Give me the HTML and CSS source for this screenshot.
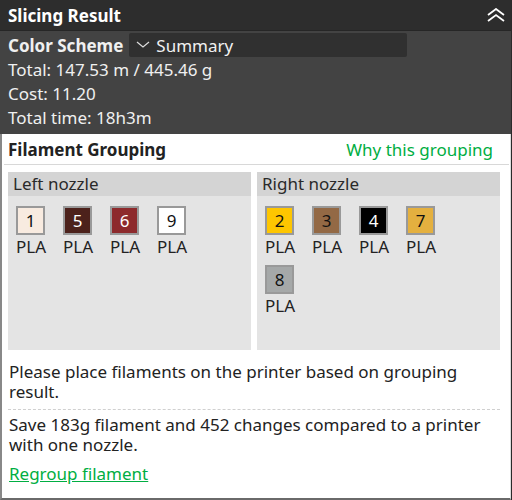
FILE: index.html
```html
<!DOCTYPE html>
<html lang="en">
<head>
  <meta charset="utf-8">
  <title>Slicing Result</title>
  <link rel="stylesheet" href="styles.css">
</head>
<body>
  <div class="panel">
    <div class="titleBar">
      <span class="title">Slicing Result</span>
      <svg class="collapse" width="18" height="14" viewBox="0 0 18 14">
        <path d="M1 7 L9 1 L17 7 M1 13 L9 7 L17 13" fill="none" stroke="#fff" stroke-width="1.8"/>
      </svg>
    </div>

    <div class="summary">
      <div class="schemeRow">
        <span class="schemeLabel">Color Scheme</span>
        <div class="combo">
          <svg width="14" height="8" viewBox="0 0 14 8">
            <path d="M1 1 L7 6 L13 1" fill="none" stroke="#ddd" stroke-width="1.2"/>
          </svg>
          <span>Summary</span>
        </div>
      </div>
      <div class="stat">Total: 147.53 m / 445.46 g</div>
      <div class="stat">Cost: 11.20</div>
      <div class="stat">Total time: 18h3m</div>
    </div>

    <div class="grouping">
      <div class="groupHead">
        <span class="groupTitle">Filament Grouping</span>
        <a class="link" href="#">Why this grouping</a>
      </div>

      <div class="nozzles">
        <div class="nozzle">
          <div class="nozzleHead">Left nozzle</div>
          <div class="slots">
            <div class="slot"><div class="swatch" style="background:#f8ebe0">1</div>PLA</div>
            <div class="slot"><div class="swatch light" style="background:#4c211b">5</div>PLA</div>
            <div class="slot"><div class="swatch light" style="background:#8d2a2c">6</div>PLA</div>
            <div class="slot"><div class="swatch" style="background:#ffffff">9</div>PLA</div>
          </div>
        </div>
        <div class="nozzle">
          <div class="nozzleHead">Right nozzle</div>
          <div class="slots">
            <div class="slot"><div class="swatch" style="background:#fec600">2</div>PLA</div>
            <div class="slot"><div class="swatch" style="background:#936945">3</div>PLA</div>
            <div class="slot"><div class="swatch light" style="background:#000000">4</div>PLA</div>
            <div class="slot"><div class="swatch" style="background:#e4b03f">7</div>PLA</div>
            <div class="slot"><div class="swatch" style="background:#a5a8a8">8</div>PLA</div>
          </div>
        </div>
      </div>

      <p class="note">Please place filaments on the printer based on grouping result.</p>
      <p class="note saving">Save 183g filament and 452 changes compared to a printer with one nozzle.</p>
      <a class="link regroup" href="#">Regroup filament</a>
    </div>
  </div>
</body>
</html>
```

FILE: styles.css
```css
body {
  margin: 0;
  background: #2b2b2b;
  font-family: "Noto Sans", "Open Sans", sans-serif;
  font-size: 17px;
}

.panel {
  width: 511px;
}

.titleBar {
  height: 30px;
  background: #2d2d2d;
  border-bottom: 1px solid #262626;
  display: flex;
  align-items: center;
  justify-content: space-between;
  padding: 0 6px 0 8px;
}

.title {
  color: #fff;
  font-weight: bold;
}

.summary {
  background: #434343;
  color: #f0f0f0;
  padding: 2px 8px 0 8px;
  height: 101px;
}

.schemeRow {
  display: flex;
  align-items: center;
  height: 24px;
  gap: 6px;
  margin-bottom: 1px;
}

.schemeLabel {
  font-weight: bold;
}

.combo {
  width: 271px;
  height: 24px;
  background: #303030;
  border-radius: 2px;
  display: flex;
  align-items: center;
  gap: 6px;
  padding-left: 7px;
}

.stat {
  line-height: 24px;
}

.grouping {
  background: #fff;
  border-left: 2px solid #888;
  border-right: 1px solid #ddd;
  border-bottom: 2px solid #6a6a6a;
  padding: 0 10px 13px 6px;
  color: #222;
}

.groupHead {
  display: flex;
  justify-content: space-between;
  align-items: center;
  height: 30px;
  border-bottom: 1px solid #d8d8d8;
  margin: 0 -9px 7px -4px;
  padding: 0 16px 0 4px;
}

.groupTitle {
  font-weight: bold;
}

.link {
  color: #00ae42;
  text-decoration: none;
}

.nozzles {
  display: flex;
  gap: 6px;
}

.nozzle {
  flex: 1;
  height: 178px;
  background: #e4e4e4;
}

.nozzleHead {
  background: #d4d4d4;
  height: 24px;
  line-height: 24px;
  padding-left: 5px;
  color: #2a2a2a;
}

.slots {
  display: flex;
  flex-wrap: wrap;
  column-gap: 16px;
  row-gap: 8px;
  padding: 10px 8px;
  width: 200px;
}

.slot {
  width: 31px;
  line-height: 20px;
}

.swatch {
  width: 25px;
  height: 25px;
  border: 2px solid #999;
  text-align: center;
  line-height: 25px;
  color: #111;
  margin-bottom: 2px;
}

.swatch.light {
  color: #fff;
}

.note {
  margin: 0;
  line-height: 20px;
  padding: 12px 0 7px 1px;
}

.saving {
  border-top: 1px dashed #d0d0d0;
  padding-top: 5px;
  padding-bottom: 0;
}

.regroup {
  display: inline-block;
  text-decoration: underline;
  margin: 9px 0 0 1px;
  line-height: 20px;
}
```
